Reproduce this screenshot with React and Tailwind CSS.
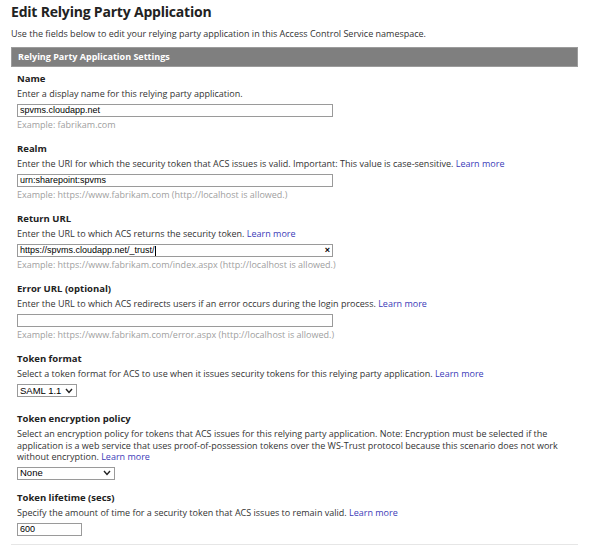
import React from 'react';

const font = { fontFamily: '"Open Sans", "Noto Sans", sans-serif' };

const Learn = () => <a href="#" className="inline-block text-[#3b3bb8]">Learn more</a>;

const Field = ({ label, children, className = '' }) => (
  <div className={className}>
    <div className="text-[9.5px] leading-[16px] font-bold text-[#222]">{label}</div>
    {children}
  </div>
);

const Desc = ({ children, className = 'leading-[12px]' }) => (
  <p className={`mt-px w-[562px] text-[9px] ${className} text-[#333]`}>{children}</p>
);

const Example = ({ children }) => (
  <p className="mt-[2px] text-[9px] leading-[12px] text-[#a0a0a0]">{children}</p>
);

const TextBox = ({ value = '', width = 'w-[316px]', clear = false, cursor = false }) => (
  <div className={`mt-[4px] h-[13px] ${width} border border-[#9a9a9a] bg-white flex items-center px-[2px] text-[9px] leading-none text-black`} style={{ fontFamily: '"Liberation Sans", Arial, sans-serif' }}>
    <span>{value}</span>
    {cursor && <span className="w-px h-[10px] bg-black" />}
    {clear && <span className="ml-auto text-[9px] font-bold leading-none">×</span>}
  </div>
);

const Select = ({ value, width, className = 'mt-[4px]' }) => (
  <div className={`${className} h-[13px] ${width} border border-[#9a9a9a] bg-white flex items-center px-[2px] text-[9.5px] leading-none text-black`} style={{ fontFamily: '"Liberation Sans", Arial, sans-serif' }}>
    <span>{value}</span>
    <svg className="ml-auto mr-[1px]" width="8" height="6" viewBox="0 0 8 6">
      <path d="M1 1 L4 4.5 L7 1" fill="none" stroke="#222" strokeWidth="1.4" />
    </svg>
  </div>
);

export default function App() {
  return (
    <div className="bg-white w-[596px] h-[547px] overflow-hidden pl-[11px] pt-[1px]" style={font}>
      <h1 className="text-[14px] leading-[22px] font-bold text-[#222] tracking-[-0.2px]">Edit Relying Party Application</h1>
      <p className="mt-[5px] text-[9px] leading-[12px] text-[#333]">
        Use the fields below to edit your relying party application in this Access Control Service namespace.
      </p>
      <div className="mt-[7px] w-[567px] h-[20px] bg-[#7f7f7f] border border-[#9c9c9c] flex items-center pl-[6px] text-[9px] font-bold text-white">
        Relying Party Application Settings
      </div>

      <div className="pl-[6px] pt-[4px]">
        <Field label="Name">
          <Desc>Enter a display name for this relying party application.</Desc>
          <TextBox value="spvms.cloudapp.net" />
          <Example>Example: fabrikam.com</Example>
        </Field>

        <Field label="Realm" className="mt-[10px]">
          <Desc>
            Enter the URI for which the security token that ACS issues is valid. Important: This value is case-sensitive. <Learn />
          </Desc>
          <TextBox value="urn:sharepoint:spvms" />
          <Example>Example: https://www.fabrikam.com (http://localhost is allowed.)</Example>
        </Field>

        <Field label="Return URL" className="mt-[10px]">
          <Desc>
            Enter the URL to which ACS returns the security token. <Learn />
          </Desc>
          <TextBox value="https://spvms.cloudapp.net/_trust/" cursor clear />
          <Example>Example: https://www.fabrikam.com/index.aspx (http://localhost is allowed.)</Example>
        </Field>

        <Field label="Error URL (optional)" className="mt-[10px]">
          <Desc>
            Enter the URL to which ACS redirects users if an error occurs during the login process. <Learn />
          </Desc>
          <TextBox />
          <Example>Example: https://www.fabrikam.com/error.aspx (http://localhost is allowed.)</Example>
        </Field>

        <Field label="Token format" className="mt-[10px]">
          <Desc>
            Select a token format for ACS to use when it issues security tokens for this relying party application. <Learn />
          </Desc>
          <Select value="SAML 1.1" width="w-[60px]" />
        </Field>

        <Field label="Token encryption policy" className="mt-[14px]">
          <Desc className="leading-[11.5px]">
            Select an encryption policy for tokens that ACS issues for this relying party application. Note: Encryption must be selected if the application is a web service that uses proof-of-possession tokens over the WS-Trust protocol because this scenario does not work without encryption. <Learn />
          </Desc>
          <Select value="None" width="w-[98px]" className="mt-[4px]" />
        </Field>

        <Field label="Token lifetime (secs)" className="mt-[10px]">
          <Desc>
            Specify the amount of time for a security token that ACS issues to remain valid. <Learn />
          </Desc>
          <TextBox value="600" width="w-[65px]" />
        </Field>
      </div>
      <div className="mt-[8px] w-[567px] h-px bg-[#e6e6e6]" />
    </div>
  );
}
